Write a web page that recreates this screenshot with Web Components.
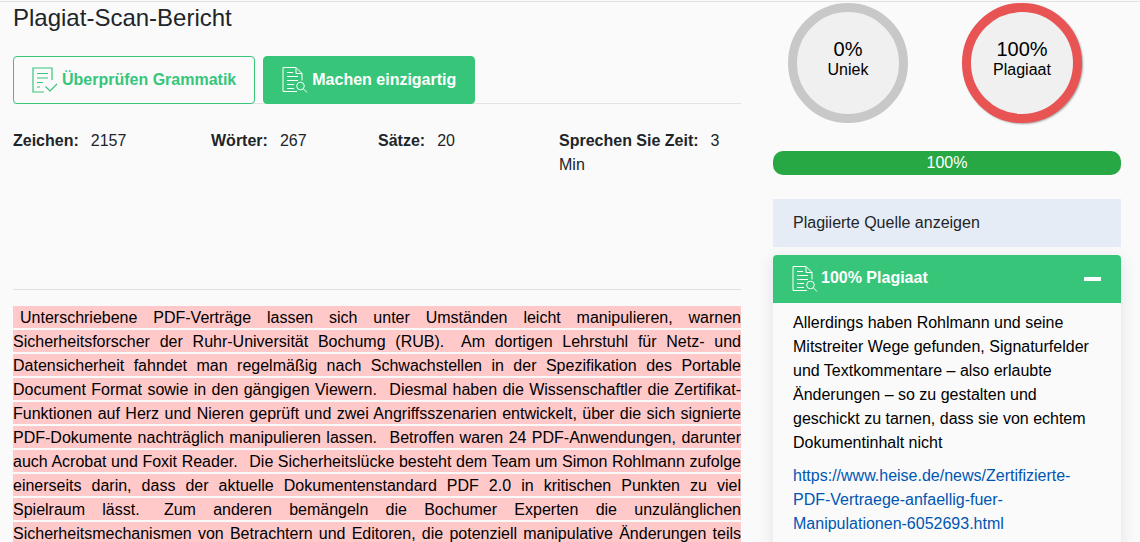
<!DOCTYPE html>
<html lang="de">
<head>
<meta charset="utf-8">
<title>Plagiat-Scan-Bericht</title>
<style>
    html, body { margin: 0; height: 542px; overflow: hidden; background: #fafafa; }
    body { font-family: "Liberation Sans", Arial, sans-serif; font-size: 16px; line-height: 24px; color: #212529; padding-top: 1px; box-sizing: border-box; }
</style>
</head>
<body>
<report-page>
    <report-heading slot="left">Plagiat-Scan-Bericht</report-heading>
    <action-bar slot="left">
        <action-button icon="check" variant="outline">Überprüfen Grammatik</action-button>
        <action-button icon="scan" variant="solid">Machen einzigartig</action-button>
    </action-bar>
    <stat-row slot="left">
        <stat-item label="Zeichen:" value="2157" style="width:198px"></stat-item>
        <stat-item label="Wörter:" value="267" style="width:167px"></stat-item>
        <stat-item label="Sätze:" value="20" style="width:181px"></stat-item>
        <stat-item label="Sprechen Sie Zeit:" value="3 Min" style="width:170px"></stat-item>
    </stat-row>
    <report-text slot="left"><plag-mark>Unterschriebene PDF-Verträge lassen sich unter Umständen leicht manipulieren, warnen Sicherheitsforscher der Ruhr-Universität Bochumg (RUB). </plag-mark><plag-mark>Am dortigen Lehrstuhl für Netz- und Datensicherheit fahndet man regelmäßig nach Schwachstellen in der Spezifikation des Portable Document Format sowie in den gängigen Viewern. </plag-mark><plag-mark>Diesmal haben die Wissenschaftler die Zertifikat-Funktionen auf Herz und Nieren geprüft und zwei Angriffsszenarien entwickelt, über die sich signierte PDF-Dokumente nachträglich manipulieren lassen. </plag-mark><plag-mark>Betroffen waren 24 PDF-Anwendungen, darunter auch Acrobat und Foxit Reader. </plag-mark><plag-mark>Die Sicherheitslücke besteht dem Team um Simon Rohlmann zufolge einerseits darin, dass der aktuelle Dokumentenstandard PDF 2.0 in kritischen Punkten zu viel Spielraum lässt. </plag-mark><plag-mark>Zum anderen bemängeln die Bochumer Experten die unzulänglichen Sicherheitsmechanismen von Betrachtern und Editoren, die potenziell manipulative Änderungen teils</plag-mark></report-text>

    <score-rings slot="right">
        <score-ring value="0%" label="Uniek" color="#c8c8c8"></score-ring>
        <score-ring value="100%" label="Plagiaat" color="#e85353" shadow></score-ring>
    </score-rings>
    <score-bar slot="right" value="100%"></score-bar>
    <source-title slot="right">Plagiierte Quelle anzeigen</source-title>
    <source-card slot="right" heading="100% Plagiaat" href="https://www.heise.de/news/Zertifizierte-PDF-Vertraege-anfaellig-fuer-Manipulationen-6052693.html">
        Allerdings haben Rohlmann und seine Mitstreiter Wege gefunden, Signaturfelder und Textkommentare – also erlaubte Änderungen – so zu gestalten und geschickt zu tarnen, dass sie von echtem Dokumentinhalt nicht
    </source-card>
</report-page>

<script>
const ICONS = {
    check: `<svg width="26" height="26" viewBox="0 0 26 26" fill="none" stroke="currentColor" stroke-width="1.2">
        <path d="M20 13V1H1v24h11"/>
        <path d="M5 6.500h11M5 11h11M5 15.500h6M5 20h3"/>
        <path d="M13.500 19.500l4.500 4.500 7-7"/>
    </svg>`,
    scan: `<svg width="26" height="26" viewBox="0 0 26 26" fill="none" stroke="currentColor" stroke-width="1">
        <path d="M15 24.500H1V.5h13l6 6v7"/>
        <path d="M14 .5v6h6"/>
        <path d="M5 5.500h6M5 9.500h11M5 13.500h11M5 17.500h7M5 21.500h7"/>
        <circle cx="18.500" cy="19" r="3.800"/>
        <path d="M21.300 21.800l3.700 3.700"/>
    </svg>`
};

class ReportPage extends HTMLElement {
    constructor() {
        super();
        this.attachShadow({ mode: 'open' });
        this.shadowRoot.innerHTML = `
            <style>
                :host { display: grid; grid-template-columns: 728px 348px; column-gap: 32px; padding-left: 13px; border-top: 1px solid #e3e3e3; height: 540px; overflow: hidden; }
                .col { min-width: 0; }
                .right { padding-top: 1px; }
            </style>
            <div class="col"><slot name="left"></slot></div>
            <div class="col right"><slot name="right"></slot></div>
        `;
    }
}

class ReportHeading extends HTMLElement {
    constructor() {
        super();
        this.attachShadow({ mode: 'open' });
        this.shadowRoot.innerHTML = `
            <style>
                :host { display: block; font-size: 24px; line-height: 31px; height: 54px; }
            </style>
            <slot></slot>
        `;
    }
}

class ActionBar extends HTMLElement {
    constructor() {
        super();
        this.attachShadow({ mode: 'open' });
        this.shadowRoot.innerHTML = `
            <style>
                :host { display: flex; gap: 8px; height: 48px; box-sizing: border-box; border-bottom: 1px solid #e3e3e3; }
            </style>
            <slot></slot>
        `;
    }
}

class ActionButton extends HTMLElement {
    constructor() {
        super();
        this.attachShadow({ mode: 'open' });
    }

    connectedCallback() {
        const solid = this.getAttribute('variant') === 'solid';
        const icon = ICONS[this.getAttribute('icon')] || '';
        this.shadowRoot.innerHTML = `
            <style>
                :host { display: flex; align-items: center; gap: 4px; height: 48px; box-sizing: border-box; padding: 0 18px; border-radius: 4px; border: 1px solid #37c679; font-weight: 700; white-space: nowrap;
                    background: ${solid ? '#37c679' : 'transparent'}; color: ${solid ? '#fff' : '#37c679'}; }
                svg { display: block; }
            </style>
            ${icon}
            <slot></slot>
        `;
    }
}

class StatRow extends HTMLElement {
    constructor() {
        super();
        this.attachShadow({ mode: 'open' });
        this.shadowRoot.innerHTML = `
            <style>
                :host { display: flex; box-sizing: border-box; height: 186px; padding-top: 25px; border-bottom: 1px solid #e3e3e3; }
            </style>
            <slot></slot>
        `;
    }
}

class StatItem extends HTMLElement {
    constructor() {
        super();
        this.attachShadow({ mode: 'open' });
    }

    connectedCallback() {
        this.shadowRoot.innerHTML = `
            <style>
                :host { display: block; box-sizing: border-box; }
                b { margin-right: 12px; }
            </style>
            <b>${this.getAttribute('label')}</b>${this.getAttribute('value')}
        `;
    }
}

class ReportText extends HTMLElement {
    constructor() {
        super();
        this.attachShadow({ mode: 'open' });
        this.shadowRoot.innerHTML = `
            <style>
                :host { display: block; margin-top: 16px; text-align: justify; text-align-last: justify; color: #000; }
            </style>
            <slot></slot>
        `;
    }
}

class PlagMark extends HTMLElement {
    constructor() {
        super();
        this.attachShadow({ mode: 'open' });
        this.shadowRoot.innerHTML = `
            <style>
                :host { display: inline; background: #ffc9c9; padding: 3px 0 2px 7px; }
            </style>
            <slot></slot>
        `;
    }
}

class ScoreRings extends HTMLElement {
    constructor() {
        super();
        this.attachShadow({ mode: 'open' });
        this.shadowRoot.innerHTML = `
            <style>
                :host { display: flex; gap: 54px; padding-left: 15px; }
            </style>
            <slot></slot>
        `;
    }
}

class ScoreRing extends HTMLElement {
    constructor() {
        super();
        this.attachShadow({ mode: 'open' });
    }

    connectedCallback() {
        const color = this.getAttribute('color');
        const shadow = this.hasAttribute('shadow') ? '1px 1px 2px rgba(0,0,0,.35)' : 'none';
        this.shadowRoot.innerHTML = `
            <style>
                :host { display: flex; flex-direction: column; align-items: center; justify-content: center; width: 120px; height: 120px; box-sizing: border-box; padding-bottom: 10px; border-radius: 50%;
                    border: 9px solid ${color}; background: #f0f0f0; box-shadow: ${shadow}; color: #000; text-align: center; }
                .value { font-size: 20px; line-height: 24px; }
                .label { font-size: 16px; line-height: 18px; }
            </style>
            <div class="value">${this.getAttribute('value')}</div>
            <div class="label">${this.getAttribute('label')}</div>
        `;
    }
}

class ScoreBar extends HTMLElement {
    constructor() {
        super();
        this.attachShadow({ mode: 'open' });
    }

    connectedCallback() {
        this.shadowRoot.innerHTML = `
            <style>
                :host { display: block; margin-top: 28px; height: 24px; line-height: 24px; border-radius: 10px; background: #28a745; color: #fff; text-align: center; }
            </style>
            ${this.getAttribute('value')}
        `;
    }
}

class SourceTitle extends HTMLElement {
    constructor() {
        super();
        this.attachShadow({ mode: 'open' });
        this.shadowRoot.innerHTML = `
            <style>
                :host { display: flex; align-items: center; margin-top: 24px; height: 48px; padding-left: 20px; background: #e6ecf5; }
            </style>
            <slot></slot>
        `;
    }
}

class SourceCard extends HTMLElement {
    constructor() {
        super();
        this.attachShadow({ mode: 'open' });
    }

    connectedCallback() {
        const href = this.getAttribute('href');
        this.shadowRoot.innerHTML = `
            <style>
                :host { display: block; margin-top: 8px; border-radius: 4px 4px 0 0; box-shadow: 0 4px 16px rgba(60,80,120,.14); }
                .head { display: flex; align-items: center; gap: 3px; height: 48px; padding: 0 20px 0 19px; background: #37c679; color: #fff; font-weight: 700; border-radius: 4px 4px 0 0; }
                .title { flex: 1; position: relative; top: -1px; }
                .minus { width: 17px; height: 4px; background: #fff; }
                .body { padding: 8px 20px 12px; color: #000; }
                p { margin: 0 0 9px; }
                a { color: #0056b3; text-decoration: none; overflow-wrap: anywhere; }
            </style>
            <div class="head">
                ${ICONS.scan}
                <span class="title">${this.getAttribute('heading')}</span>
                <span class="minus"></span>
            </div>
            <div class="body">
                <p><slot></slot></p>
                <a href="${href}">${href}</a>
            </div>
        `;
    }
}

customElements.define('report-page', ReportPage);
customElements.define('report-heading', ReportHeading);
customElements.define('action-bar', ActionBar);
customElements.define('action-button', ActionButton);
customElements.define('stat-row', StatRow);
customElements.define('stat-item', StatItem);
customElements.define('report-text', ReportText);
customElements.define('plag-mark', PlagMark);
customElements.define('score-rings', ScoreRings);
customElements.define('score-ring', ScoreRing);
customElements.define('score-bar', ScoreBar);
customElements.define('source-title', SourceTitle);
customElements.define('source-card', SourceCard);
</script>
</body>
</html>
